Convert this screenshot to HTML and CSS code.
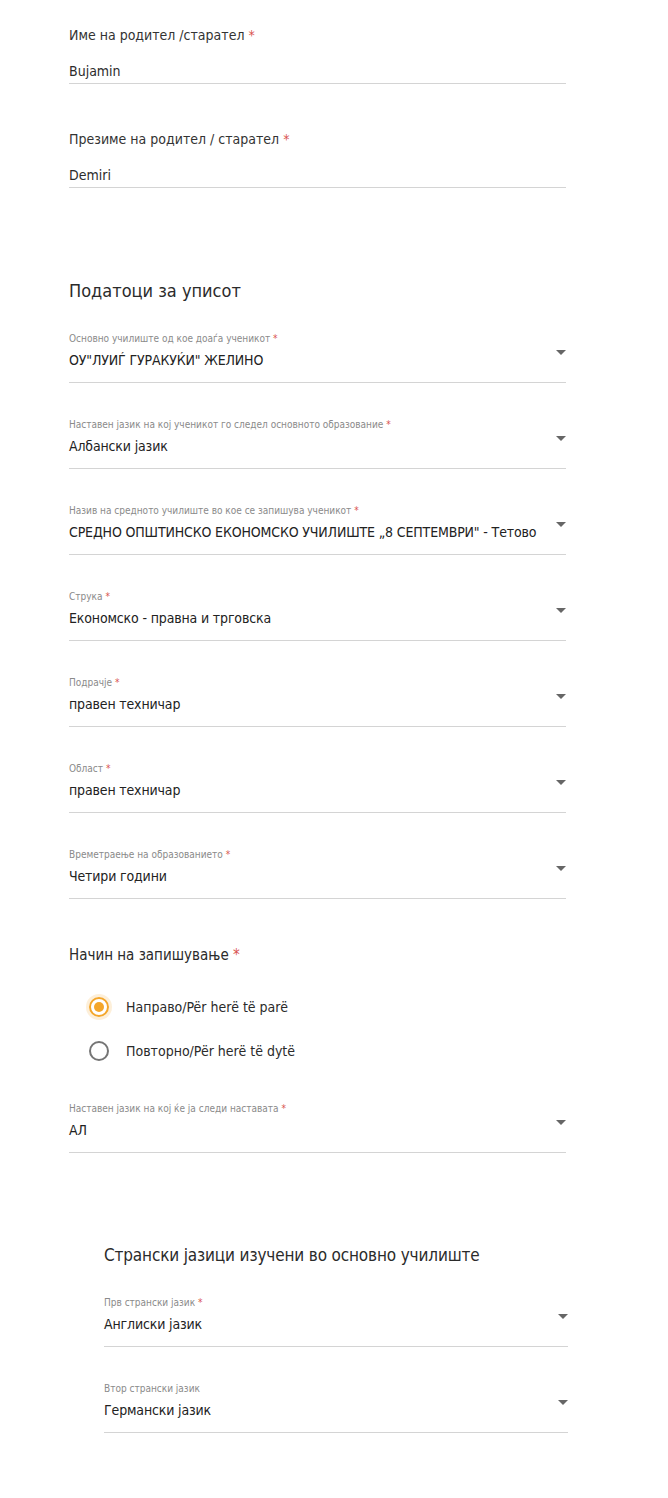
FILE: index.html
```html
<!DOCTYPE html>
<html lang="mk">
<head>
<meta charset="utf-8">
<title>Форма за упис</title>
<link rel="stylesheet" href="styles.css">
</head>
<body>
<main class="form">
  <div class="text-field">
    <div class="tf-label">Име на родител /старател <span class="req">*</span></div>
    <div class="tf-value">Bujamin</div>
  </div>
  <div class="text-field">
    <div class="tf-label">Презиме на родител / старател <span class="req">*</span></div>
    <div class="tf-value">Demiri</div>
  </div>

  <h2 class="section-title">Податоци за уписот</h2>

  <div class="select-field">
    <div class="sf-label">Основно училиште од кое доаѓа ученикот <span class="req">*</span></div>
    <div class="sf-value">ОУ"ЛУИЃ ГУРАКУЌИ" ЖЕЛИНО</div>
    <span class="arrow"></span>
  </div>
  <div class="select-field">
    <div class="sf-label">Наставен јазик на кој ученикот го следел основното образование <span class="req">*</span></div>
    <div class="sf-value">Албански јазик</div>
    <span class="arrow"></span>
  </div>
  <div class="select-field">
    <div class="sf-label">Назив на средното училиште во кое се запишува ученикот <span class="req">*</span></div>
    <div class="sf-value">СРЕДНО ОПШТИНСКО ЕКОНОМСКО УЧИЛИШТЕ „8 СЕПТЕМВРИ" - Тетово</div>
    <span class="arrow"></span>
  </div>
  <div class="select-field">
    <div class="sf-label">Струка <span class="req">*</span></div>
    <div class="sf-value">Економско - правна и трговска</div>
    <span class="arrow"></span>
  </div>
  <div class="select-field">
    <div class="sf-label">Подрачје <span class="req">*</span></div>
    <div class="sf-value">правен техничар</div>
    <span class="arrow"></span>
  </div>
  <div class="select-field">
    <div class="sf-label">Област <span class="req">*</span></div>
    <div class="sf-value">правен техничар</div>
    <span class="arrow"></span>
  </div>
  <div class="select-field">
    <div class="sf-label">Времетраење на образованието <span class="req">*</span></div>
    <div class="sf-value">Четири години</div>
    <span class="arrow"></span>
  </div>

  <div class="radio-title">Начин на запишување <span class="req">*</span></div>
  <div class="radio-group">
    <div class="radio-row">
      <span class="radio radio-checked"></span>
      <span class="radio-text">Направо/Për herë të parë</span>
    </div>
    <div class="radio-row">
      <span class="radio"></span>
      <span class="radio-text">Повторно/Për herë të dytë</span>
    </div>
  </div>

  <div class="select-field">
    <div class="sf-label">Наставен јазик на кој ќе ја следи наставата <span class="req">*</span></div>
    <div class="sf-value">АЛ</div>
    <span class="arrow"></span>
  </div>

  <section class="sub-section">
    <h3 class="sub-title">Странски јазици изучени во основно училиште</h3>
    <div class="select-field">
      <div class="sf-label">Прв странски јазик <span class="req">*</span></div>
      <div class="sf-value">Англиски јазик</div>
      <span class="arrow"></span>
    </div>
    <div class="select-field">
      <div class="sf-label">Втор странски јазик</div>
      <div class="sf-value">Германски јазик</div>
      <span class="arrow"></span>
    </div>
  </section>
</main>
</body>
</html>
```

FILE: styles.css
```css
* { box-sizing: border-box; }

html, body {
  margin: 0;
  padding: 0;
  background: #ffffff;
}

body {
  font-family: "DejaVu Sans Condensed", "DejaVu Sans", sans-serif;
  color: #2b2b2b;
}

.form {
  width: 497px;
  margin-left: 69px;
  padding-top: 25px;
  padding-bottom: 40px;
}

.req { color: #d9534f; }

/* text fields */
.text-field {
  margin-bottom: 45px;
}
.tf-label {
  font-size: 14px;
  line-height: 20px;
  color: #333;
}
.tf-value {
  margin-top: 16px;
  font-size: 14px;
  line-height: 20px;
  color: #2b2b2b;
  padding-bottom: 2px;
  border-bottom: 1px solid #d4d4d4;
}
.text-field + .text-field { margin-bottom: 0; }

.section-title {
  margin: 90px 0 28px;
  font-size: 18px;
  line-height: 26px;
  font-weight: normal;
  color: #2b2b2b;
}

/* select fields */
.select-field {
  position: relative;
  padding-bottom: 12px;
  border-bottom: 1px solid #d4d4d4;
  margin-bottom: 35px;
}
.sf-label {
  font-size: 10px;
  line-height: 14px;
  color: #8a8a8a;
}
.sf-value {
  margin-top: 4px;
  font-size: 14px;
  line-height: 20px;
  letter-spacing: -0.15px;
  color: #222;
}
.arrow {
  position: absolute;
  right: 0;
  top: 18px;
  width: 0;
  height: 0;
  border-left: 5px solid transparent;
  border-right: 5px solid transparent;
  border-top: 5px solid #666;
}

/* radios */
.radio-title {
  margin-top: 45px;
  font-size: 15px;
  line-height: 22px;
  color: #2b2b2b;
}
.radio-group {
  margin-top: 19px;
  margin-bottom: 29px;
  padding-left: 20px;
}
.radio-row {
  display: flex;
  align-items: center;
  gap: 17px;
  height: 44px;
}
.radio {
  width: 20px;
  height: 20px;
  border-radius: 50%;
  border: 2px solid #757575;
  flex: none;
  position: relative;
}
.radio-checked {
  border-color: #f4a62a;
  box-shadow: 0 0 0 3px rgba(244, 166, 42, 0.18);
}
.radio-checked::after {
  content: "";
  position: absolute;
  left: 3px;
  top: 3px;
  width: 10px;
  height: 10px;
  border-radius: 50%;
  background: #f4a62a;
}
.radio-text {
  font-size: 14px;
  color: #2b2b2b;
}

/* sub section */
.sub-section {
  margin-left: 35px;
  margin-right: -2px;
  margin-top: 90px;
}
.sub-title {
  margin: 0 0 29px;
  font-size: 17px;
  line-height: 24px;
  letter-spacing: -0.15px;
  font-weight: normal;
  color: #2b2b2b;
}
```
